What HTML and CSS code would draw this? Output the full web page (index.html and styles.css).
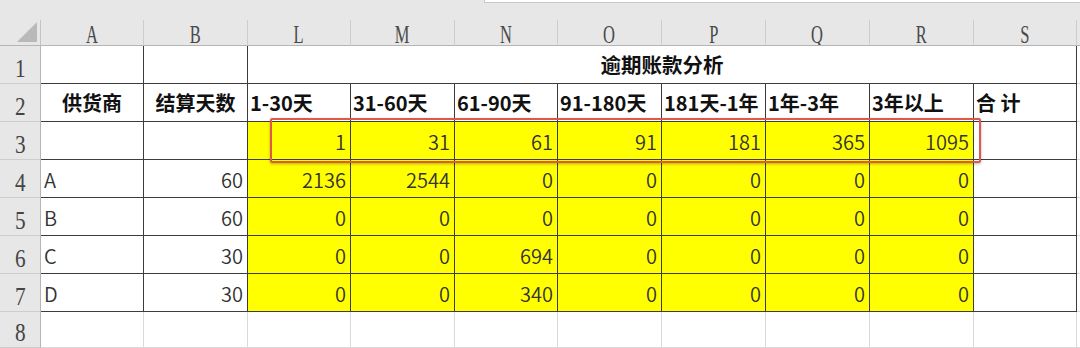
FILE: index.html
```html
<!DOCTYPE html>
<html lang="zh">
<head>
<meta charset="utf-8">
<link rel="stylesheet" href="styles.css">
</head>
<body>
<div class="wrap">
  <div class="topbar"><div class="namebox"></div></div>
  <div class="sheet">
    <div class="corner"><span class="tri"></span></div>
    <div class="ch"><span>A</span></div>
    <div class="ch"><span>B</span></div>
    <div class="ch"><span>L</span></div>
    <div class="ch"><span>M</span></div>
    <div class="ch"><span>N</span></div>
    <div class="ch"><span>O</span></div>
    <div class="ch"><span>P</span></div>
    <div class="ch"><span>Q</span></div>
    <div class="ch"><span>R</span></div>
    <div class="ch"><span>S</span></div>
    <div class="ch fill"></div>

    <div class="rh"><span>1</span></div>
    <div class="c d"></div>
    <div class="c d"></div>
    <div class="c d title">逾期账款分析</div>
    <div class="c fill"></div>

    <div class="rh"><span>2</span></div>
    <div class="c d b ctr">供货商</div>
    <div class="c d b ctr">结算天数</div>
    <div class="c d b">1-30天</div>
    <div class="c d b">31-60天</div>
    <div class="c d b">61-90天</div>
    <div class="c d b">91-180天</div>
    <div class="c d b">181天-1年</div>
    <div class="c d b">1年-3年</div>
    <div class="c d b">3年以上</div>
    <div class="c d b">合 计</div>
    <div class="c fill"></div>

    <div class="rh"><span>3</span></div>
    <div class="c d"></div>
    <div class="c d"></div>
    <div class="c d y n">1</div>
    <div class="c d y n">31</div>
    <div class="c d y n">61</div>
    <div class="c d y n">91</div>
    <div class="c d y n">181</div>
    <div class="c d y n">365</div>
    <div class="c d y n">1095</div>
    <div class="c d"></div>
    <div class="c fill"></div>

    <div class="rh"><span>4</span></div>
    <div class="c d t">A</div>
    <div class="c d n">60</div>
    <div class="c d y n">2136</div>
    <div class="c d y n">2544</div>
    <div class="c d y n">0</div>
    <div class="c d y n">0</div>
    <div class="c d y n">0</div>
    <div class="c d y n">0</div>
    <div class="c d y n">0</div>
    <div class="c d"></div>
    <div class="c fill"></div>

    <div class="rh"><span>5</span></div>
    <div class="c d t">B</div>
    <div class="c d n">60</div>
    <div class="c d y n">0</div>
    <div class="c d y n">0</div>
    <div class="c d y n">0</div>
    <div class="c d y n">0</div>
    <div class="c d y n">0</div>
    <div class="c d y n">0</div>
    <div class="c d y n">0</div>
    <div class="c d"></div>
    <div class="c fill"></div>

    <div class="rh"><span>6</span></div>
    <div class="c d t">C</div>
    <div class="c d n">30</div>
    <div class="c d y n">0</div>
    <div class="c d y n">0</div>
    <div class="c d y n">694</div>
    <div class="c d y n">0</div>
    <div class="c d y n">0</div>
    <div class="c d y n">0</div>
    <div class="c d y n">0</div>
    <div class="c d"></div>
    <div class="c fill"></div>

    <div class="rh"><span>7</span></div>
    <div class="c d t">D</div>
    <div class="c d n">30</div>
    <div class="c d y n">0</div>
    <div class="c d y n">0</div>
    <div class="c d y n">340</div>
    <div class="c d y n">0</div>
    <div class="c d y n">0</div>
    <div class="c d y n">0</div>
    <div class="c d y n">0</div>
    <div class="c d"></div>
    <div class="c fill"></div>

    <div class="rh"><span>8</span></div>
    <div class="c"></div>
    <div class="c"></div>
    <div class="c"></div>
    <div class="c"></div>
    <div class="c"></div>
    <div class="c"></div>
    <div class="c"></div>
    <div class="c"></div>
    <div class="c"></div>
    <div class="c"></div>
    <div class="c fill"></div>
  </div>
  <div class="redbox"></div>
</div>
</body>
</html>
```

FILE: styles.css
```css
* { box-sizing: border-box; }
html, body { margin: 0; padding: 0; background: #fff; }
body { width: 1080px; height: 348px; overflow: hidden; }

.wrap { position: relative; width: 1080px; height: 348px; }

.topbar {
  height: 20px;
  background: #e7e7e7;
  display: flex;
  justify-content: flex-end;
}
.namebox {
  width: 596px;
  height: 3px;
  background: #fff;
  border-left: 1px solid #c9c9c9;
  border-bottom: 1px solid #c9c9c9;
}

.sheet {
  display: grid;
  grid-template-columns: 41px 103px 104px 103px 104px 103px 104px 104px 104px 104px 103px 3px;
  grid-template-rows: 26px 38px 38px 38px 38px 38px 38px 38px 36px;
}

.corner {
  background: #e7e7e7;
  border-right: 1px solid #c4c4c4;
  border-bottom: 1px solid #b5b5b5;
  position: relative;
}
.tri {
  position: absolute;
  right: 3px;
  bottom: 3px;
  width: 0; height: 0;
  border-left: 20px solid transparent;
  border-bottom: 20px solid #b9b9b9;
}

.ch {
  background: #e7e7e7;
  border-right: 1px solid #cdcdcd;
  border-bottom: 1px solid #b5b5b5;
  display: flex;
  align-items: center;
  justify-content: center;
  font-family: "Liberation Serif", "DejaVu Serif", serif;
  font-size: 25px;
  color: #4a4a4a;
  overflow: hidden;
}
.ch span { display: inline-block; transform: scaleX(0.66); line-height: 1; padding-top: 3px; }
.ch.fill { border-right: none; }

.rh {
  background: #e7e7e7;
  border-right: 1px solid #b5b5b5;
  border-bottom: 1px solid #cdcdcd;
  display: flex;
  align-items: flex-end;
  justify-content: center;
  font-family: "Liberation Serif", "DejaVu Serif", serif;
  font-size: 25px;
  color: #444;
  padding-bottom: 2px;
  overflow: hidden;
}
.rh span { display: inline-block; transform: scaleX(0.85); line-height: 1; }

.c {
  border-right: 1px solid #d9d9d9;
  border-bottom: 1px solid #d9d9d9;
  display: flex;
  align-items: center;
  font-family: "Noto Sans CJK SC", "Noto Sans", sans-serif;
  font-size: 20px;
  font-weight: 350;
  color: #333;
  white-space: nowrap;
  overflow: hidden;
  line-height: 1;
}
.c.fill { border-right: none; }
.c.d { border-right-color: #3c3c3c; border-bottom-color: #3c3c3c; }
.c.y { background: #ffff00; }
.c.n { justify-content: flex-end; padding-right: 4px; padding-top: 2px; }
.c.t { padding-left: 3px; padding-top: 2px; }
.c.b { font-weight: 700; font-size: 20px; padding-left: 2px; color: #111; }
.c.ctr { justify-content: center; padding-left: 0; }
.c.title {
  grid-column: 4 / 12;
  justify-content: center;
  font-weight: 700;
  font-size: 20.5px;
  color: #111;
}

.redbox {
  position: absolute;
  left: 270px;
  top: 118px;
  width: 711px;
  height: 45px;
  border: 2px solid #e0574c;
  border-radius: 2px;
  box-shadow: 0 1px 3px rgba(0, 0, 0, 0.3);
}
```
